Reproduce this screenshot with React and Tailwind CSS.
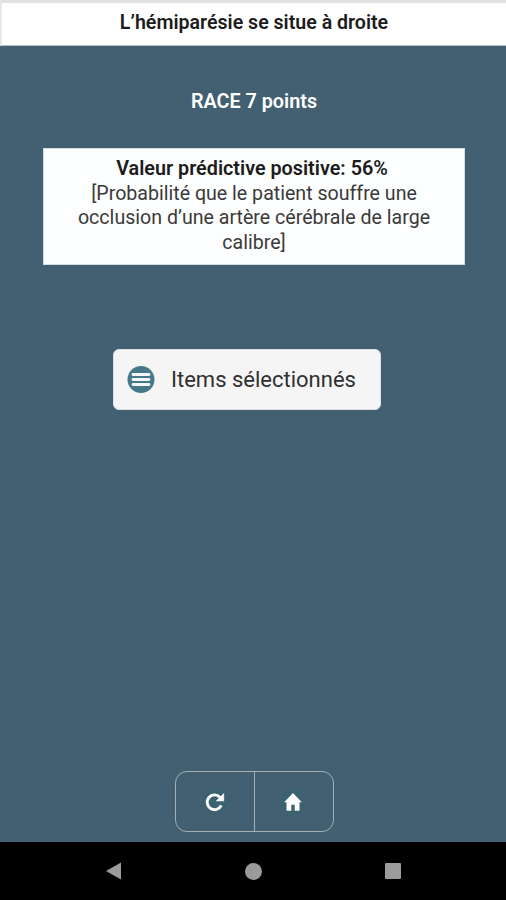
const roboto = "font-[Roboto,'Liberation_Sans',sans-serif]";

function MenuIcon() {
  return (
    <svg width="28" height="28" viewBox="0 0 28 28" aria-hidden="true">
      <circle cx="14" cy="13.5" r="13.5" fill="#45798a" />
      <path d="M6 8.5h16M6 13.5h16M6 18.5h16" stroke="#f5f6f7" strokeWidth="2.8" strokeLinecap="round" />
    </svg>
  );
}

function RefreshIcon() {
  return (
    <svg width="26" height="26" viewBox="0 0 26 26" aria-hidden="true">
      <circle cx="13" cy="13" r="12.5" fill="#36636f" opacity="0.5" />
      <path d="M18 8.2A7.4 7.4 0 1 0 19.3 16.4" fill="none" stroke="#fff" strokeWidth="2.9" />
      <path d="M21.8 4.4v7.6h-7.6z" fill="#fff" stroke="#fff" strokeWidth="0.5" />
    </svg>
  );
}

function HomeIcon() {
  return (
    <svg width="26" height="26" viewBox="0 0 26 26" aria-hidden="true">
      <circle cx="13" cy="13" r="12.5" fill="#36636f" opacity="0.5" />
      <path d="M13 4 4.2 13.2h2.3V21.8h4.8v-6h3.4v6h4.8v-8.6h2.3z" fill="#fff" />
    </svg>
  );
}

export default function App() {
  return (
    <div className={`${roboto} flex h-[900px] w-[506px] flex-col overflow-hidden bg-[#426071]`}>
      <header className="flex h-[46px] items-center justify-center border-t-[3px] border-b border-l-2 border-t-[#e2e2e2] border-b-[#b5c2c8] border-l-[#e8e8e8] bg-white pb-0.5">
        <h1 className="whitespace-nowrap text-[19.6px] font-semibold text-[#1c1c1c]">L’hémiparésie se situe à droite</h1>
      </header>

      <main className="flex flex-1 flex-col items-center">
        <h2 className="mt-11 ml-0.5 whitespace-nowrap text-[19.8px] leading-6 font-semibold text-white">RACE 7 points</h2>

        <section className="mt-[34px] ml-0.5 h-[117px] w-[422px] border border-[#d5dde0] bg-[#fdfefe] pt-2 text-center text-[19.6px] leading-[24.5px] text-[#3a3a3a]">
          <p className="mr-1 whitespace-nowrap text-[19.8px] font-semibold text-[#1c1c1c]">Valeur prédictive positive: 56%</p>
          <p className="whitespace-nowrap">
            [Probabilité que le patient souffre une
            <br />
            occlusion d’une artère cérébrale de large
            <br />
            calibre]
          </p>
        </section>

        <button className="mt-[84px] mr-3 flex h-[61px] w-[268px] items-center gap-4 rounded-md border border-[#dde1e3] bg-[#f5f5f6] pl-[13px] text-[#303030]">
          <MenuIcon />
          <span className="whitespace-nowrap pb-px text-[22px]">Items sélectionnés</span>
        </button>

        <div className="mt-auto mb-2.5 ml-[3px] flex h-[61px] w-[159px] rounded-xl border border-[#a5b0b5]">
          <button className="flex flex-1 items-center justify-center border-r border-[#a5b0b5]" aria-label="Recommencer">
            <RefreshIcon />
          </button>
          <button className="flex flex-1 items-center justify-center pr-px" aria-label="Accueil">
            <HomeIcon />
          </button>
        </div>
      </main>

      <nav className="flex h-[58px] items-center justify-between bg-black pr-[105px] pl-[106px]">
        <svg width="16" height="18" viewBox="0 0 16 18" aria-hidden="true">
          <path d="M0 9 15 .5v17z" fill="#9b9b9b" />
        </svg>
        <span className="size-[17px] rounded-full bg-[#9b9b9b]" />
        <span className="size-4 rounded-[1px] bg-[#9b9b9b]" />
      </nav>
    </div>
  );
}
